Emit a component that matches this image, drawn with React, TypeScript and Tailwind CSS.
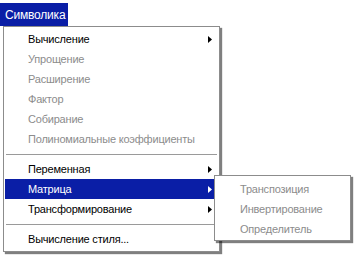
import React from 'react';

type Item =
  | { kind: 'item'; label: string; disabled?: boolean; sub?: boolean; active?: boolean }
  | { kind: 'sep' };

const MAIN: Item[] = [
  { kind: 'item', label: 'Вычисление', sub: true },
  { kind: 'item', label: 'Упрощение', disabled: true },
  { kind: 'item', label: 'Расширение', disabled: true },
  { kind: 'item', label: 'Фактор', disabled: true },
  { kind: 'item', label: 'Собирание', disabled: true },
  { kind: 'item', label: 'Полиномиальные коэффициенты', disabled: true },
  { kind: 'sep' },
  { kind: 'item', label: 'Переменная', sub: true },
  { kind: 'item', label: 'Матрица', sub: true, active: true },
  { kind: 'item', label: 'Трансформирование', sub: true },
  { kind: 'sep' },
  { kind: 'item', label: 'Вычисление стиля...' },
];

const SUB = ['Транспозиция', 'Инвертирование', 'Определитель'];

const Arrow = ({ white }: { white?: boolean }) => (
  <svg width="4" height="7" viewBox="0 0 4 7" className="shrink-0">
    <path d="M0 0 L4 3.5 L0 7 Z" fill={white ? '#ffffff' : '#000000'} />
  </svg>
);

export default function App() {
  return (
    <div className="relative w-[355px] h-[256px] overflow-hidden bg-white font-['Liberation_Sans',Arial,sans-serif] text-[11px] tracking-[-0.2px] leading-none">
      {/* menu bar */}
      <div className="pt-[3px] flex">
        <div className="w-[68px] h-[23px] bg-[#0a1ea6] text-white text-[12px] flex items-center pl-[5px]">
          Символика
        </div>
      </div>

      {/* main dropdown */}
      <div className="absolute left-[3px] top-[26px] w-[217px] bg-white border border-[#8c8c8c] py-[2px] px-[1px] shadow-[2px_2px_1px_rgba(0,0,0,0.5)]">
        {MAIN.map((it, i) =>
          it.kind === 'sep' ? (
            <div key={i} className="h-[10px] flex items-center px-[1px]">
              <div className="w-full h-px bg-[#9a9a9a]" />
            </div>
          ) : (
            <div
              key={i}
              className={
                'h-[20px] flex items-center pl-[23px] pr-[6px] ' +
                (it.active ? 'bg-[#0a1ea6] text-white' : it.disabled ? 'text-[#8c8c8c]' : 'text-black')
              }
            >
              <span className="flex-1 whitespace-nowrap">{it.label}</span>
              {it.sub && <Arrow white={it.active} />}
            </div>
          )
        )}
      </div>

      {/* submenu */}
      <div className="absolute left-[214px] top-[175px] w-[137px] bg-white border border-[#8c8c8c] pt-[3px] pb-[1px] shadow-[2px_2px_1px_rgba(0,0,0,0.5)]">
        {SUB.map((s) => (
          <div key={s} className="h-[20px] flex items-center pl-[25px] text-[#8c8c8c] whitespace-nowrap">
            {s}
          </div>
        ))}
      </div>
    </div>
  );
}
